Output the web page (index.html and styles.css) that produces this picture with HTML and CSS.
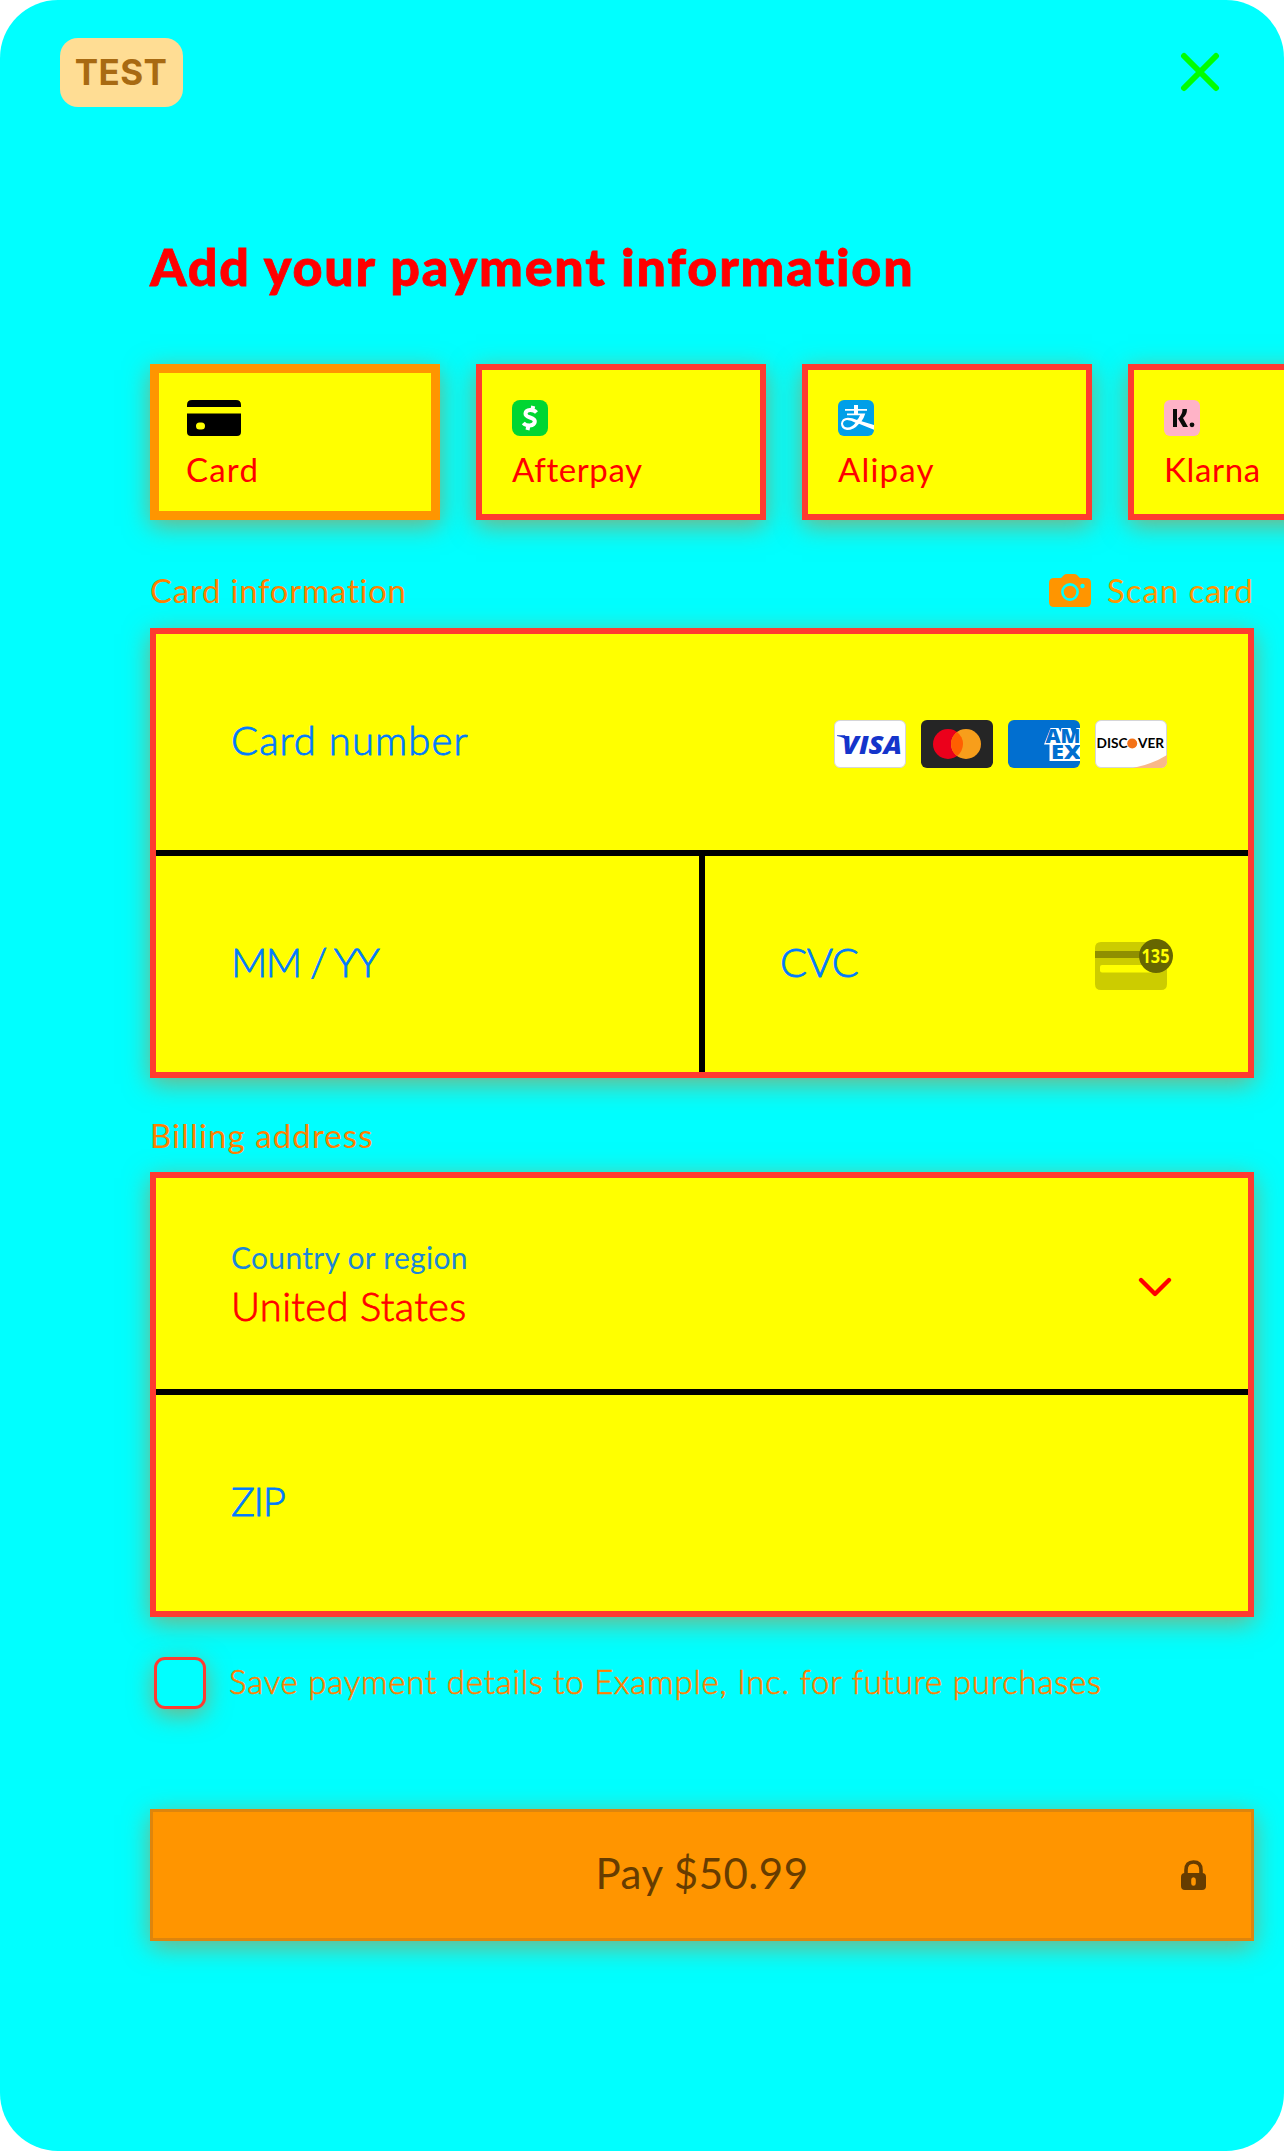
FILE: index.html
```html
<!DOCTYPE html>
<html lang="en">
<head>
<meta charset="utf-8">
<title>Payment</title>
<link rel="stylesheet" href="styles.css">
</head>
<body>
<main class="sheet">
  <header class="topbar">
    <span class="badge"><span class="t-test">TEST</span></span>
    <button class="close" aria-label="Close">
      <svg width="40" height="40" viewBox="0 0 40 40"><path d="M4 4L36 36M36 4L4 36" stroke="#0f0" stroke-width="6" stroke-linecap="round"/></svg>
    </button>
  </header>
  <h1><span class="t-title">Add your payment information</span></h1>
  <div class="methods">
    <div class="method selected">
      <svg width="55" height="36" viewBox="-1 0 55 36"><path d="M0 7V5Q0 0 5 0H49Q54 0 54 5V7ZM0 13.500H54V32Q54 36 50 36H4Q0 36 0 32ZM12.500 22.500a3.500 3.500 0 0 0 0 7h2a3.500 3.500 0 0 0 0-7z" fill-rule="evenodd"/></svg>
      <span class="t-card">Card</span>
    </div>
    <div class="method">
      <svg width="36" height="36" viewBox="0 0 36 36"><rect width="36" height="36" rx="8" fill="#00d632"/><path d="M24.500 12.500C21.500 9.300 14 9 13.500 13.500C13 18.500 23.500 16.500 22.800 21.800C22.200 26.500 14.500 26.500 11.300 23M20.500 9.500L21.200 6M15.500 30L16.300 26" fill="none" stroke="#fff" stroke-width="4"/></svg>
      <span class="t-after">Afterpay</span>
    </div>
    <div class="method">
      <svg width="36" height="36" viewBox="0 0 36 36"><rect width="36" height="36" rx="6" fill="#009fe8"/><path d="M16 5h4v4h9v1.800H20v2.700h7.300Q26 18 23.500 21.200L36 25v4.800L21 23.700Q16 30 9 30Q3 29 3 23.500Q3.500 18 10 17.700Q14 17.700 19 20Q21 18 22 15.300H9v-1.800h7v-2.700H7V9h9zM9 20Q5 20.500 5 24Q6 27.500 9.500 27.500Q14 27.500 17.500 22.700Q13 20 9 20z" fill="#fff" fill-rule="evenodd"/></svg>
      <span class="t-ali">Alipay</span>
    </div>
    <div class="method">
      <svg width="36" height="36" viewBox="0 0 36 36"><rect width="36" height="36" rx="6" fill="#ffb3c7"/><path d="M9 9h4v18H9zM18.500 9h4.500q0 6-4 9l5 9h-5L14 18.500q4.500-3.500 4.500-9.500z" fill="#0a0b09"/><circle cx="28" cy="24.800" r="2.400" fill="#0a0b09"/></svg>
      <span class="t-klarna">Klarna</span>
    </div>
  </div>
  <div class="heading">
    <span class="t-info">Card information</span>
    <span class="scan">
      <svg width="42" height="33" viewBox="0 0 42 33"><path d="M5 4h7l3-3q1-1 3-1h7q2 0 3 1l3 3h6q5 0 5 5v19q0 5-5 5H5q-5 0-5-5V9q0-5 5-5z" fill="#ff9500"/><circle cx="21" cy="18" r="7.600" fill="none" stroke="#0ff" stroke-width="2.600"/><circle cx="33.500" cy="12" r="2.200" fill="#0ff"/></svg>
      <span class="t-scan">Scan card</span>
    </span>
  </div>
  <section class="panel card-panel">
    <div class="row number">
      <span class="t-number">Card number</span>
      <span class="brands">
        <svg width="72" height="48" viewBox="0 0 72 48"><rect x=".5" y=".5" width="71" height="47" rx="5.500" fill="#fff" stroke="#d5d5d8"/><text x="8" y="34" class="visa" textLength="60" lengthAdjust="spacingAndGlyphs">VISA</text><path d="M3 15.300h8l4 7Q10 17 3 16z" fill="#1434cb"/></svg>
        <svg width="72" height="48" viewBox="0 0 72 48"><rect width="72" height="48" rx="6" fill="#252525"/><circle cx="27" cy="24" r="15" fill="#eb001b"/><circle cx="45" cy="24" r="15" fill="#f79e1b"/><path d="M36 12a15 15 0 0 1 0 24a15 15 0 0 1 0-24z" fill="#ff5f00"/></svg>
        <svg width="72" height="48" viewBox="0 0 72 48"><clipPath id="a"><rect width="72" height="48" rx="6"/></clipPath><g clip-path="url(#a)"><rect width="72" height="48" fill="#016fd0"/><path d="M42.500 8h8l2 4 1-4h9l3 8 3-8h5v16.500H36z" fill="#fff"/><path d="M41.500 24H73V41H41.500z" fill="#fff"/><text x="37.500" y="23" class="amex" textLength="35" lengthAdjust="spacingAndGlyphs">AM</text><text x="43" y="39" class="amex" textLength="30" lengthAdjust="spacingAndGlyphs">EX</text></g></svg>
        <svg width="72" height="48" viewBox="0 0 72 48"><clipPath id="d"><rect width="72" height="48" rx="6"/></clipPath><rect x=".5" y=".5" width="71" height="47" rx="5.500" fill="#fff" stroke="#d5d5d8"/><path d="M38 48Q58 44 72 35v13z" fill="#f8b888" clip-path="url(#d)"/><text x="1.500" y="28" class="disc" textLength="31" lengthAdjust="spacingAndGlyphs">DISC</text><circle cx="37.200" cy="23.500" r="5" fill="#f47216"/><text x="43" y="28" class="disc" textLength="26" lengthAdjust="spacingAndGlyphs">VER</text></svg>
      </span>
    </div>
    <div class="pair">
      <div class="row"><span class="t-date">MM / YY</span></div>
      <div class="row cvc">
        <span class="t-cvc">CVC</span>
        <svg width="78" height="51" viewBox="0 0 78 51"><path d="M6 3H66q6 0 6 6v36q0 6-6 6H6q-6 0-6-6V9Q0 3 6 3z" fill="#cc0"/><path d="M0 12h60v7H0z" fill="#8f8f00"/><rect x="5" y="26" width="60" height="7.500" rx="2" fill="#ff0"/><circle cx="61" cy="17" r="17" fill="#660"/><text x="46.500" y="24" class="digits" textLength="28" lengthAdjust="spacingAndGlyphs">135</text></svg>
      </div>
    </div>
  </section>
  <div class="heading billing"><span class="t-bill">Billing address</span></div>
  <section class="panel bill-panel">
    <div class="row country">
      <div class="stack"><span class="t-country">Country or region</span><span class="t-us">United States</span></div>
      <svg class="chevron" width="34" height="20" viewBox="0 0 34 20"><path d="M3 3L17 17L31 3" fill="none" stroke="#f00" stroke-width="4.300" stroke-linecap="round" stroke-linejoin="round"/></svg>
    </div>
    <div class="row zip"><span class="t-zip">ZIP</span></div>
  </section>
  <label class="save"><span class="box"></span><span class="t-save">Save payment details to Example, Inc. for future purchases</span></label>
  <button class="pay">
    <span></span><span class="t-pay">Pay $50.99</span>
    <svg width="25" height="30" viewBox="0 0 25 30"><path d="M5 14V10Q5 2 12.500 2Q20 2 20 10V14" fill="none" stroke="#663c00" stroke-width="3.600"/><path d="M4 13h17q4 0 4 4v9q0 4-4 4H4q-4 0-4-4v-9q0-4 4-4zM12.500 17.300q-2.300 0-2.300 2.500v3.500q0 2.500 2.300 2.500t2.300-2.500v-3.500q0-2.500-2.300-2.500z" fill="#663c00" fill-rule="evenodd"/></svg>
  </button>
</main>
</body>
</html>
```
FILE: styles.css
```css
* { box-sizing: border-box; }
body { margin: 0; background: #fff; font-family: Lato, "Open Sans", sans-serif; }
button { border: 0; padding: 0; background: none; font: inherit; }
svg { display: block; flex: none; }
span { white-space: nowrap; }
.sheet { width: 1284px; height: 2151px; background: #0ff; border-radius: 58px; overflow: hidden; }
.topbar { height: 107px; padding: 38px 64px 0 60px; display: flex; justify-content: space-between; align-items: flex-start; }
.badge { width: 123px; height: 69px; border-radius: 18px; background: #ffdd94; display: flex; align-items: center; justify-content: center; }
.close { margin-top: 14px; }
h1 { margin: 126px 0 0 150px; height: 66px; line-height: 66px; color: #f00; font-size: 52px; font-weight: 900; letter-spacing: 1.85px; -webkit-text-stroke: .8px #f00; }
.methods { margin: 65px 0 0 150px; display: flex; gap: 36px; }
.method { flex: none; width: 290px; height: 156px; border: 6px solid #ff3b30; background: #ff0; padding: 30px; display: flex; flex-direction: column; gap: 13px; color: #f00; line-height: 40px; }
.method.selected { border: 9px solid #ff9500; padding: 27px; }
.method, .panel, .pay { box-shadow: 0 6px 24px rgba(185, 140, 66, .68); }
.heading { margin: 48px 30px 0 150px; height: 44px; display: flex; justify-content: space-between; align-items: center; color: #ff8000; }
.heading span { position: static; }
.scan { display: flex; align-items: center; gap: 16px; color: #ff9500; }
.panel { margin: 16px 30px 0 150px; border: 6px solid #ff3b30; background: #ff0; color: #007aff; }
.row { display: flex; align-items: center; justify-content: space-between; padding: 0 80px 5px 75px; }
.number { height: 222px; border-bottom: 6px solid #000; padding-right: 81px; }
.brands { display: flex; gap: 15px; margin-top: 9px; }
.pair { display: grid; grid-template-columns: 549px 1fr; height: 216px; }
.pair .row:first-child { border-right: 6px solid #000; }
.pair .cvc { padding-right: 75px; }
.cvc svg { margin-top: 5px; }
.billing { margin-top: 35px; }
.bill-panel { margin-top: 15px; }
.country { height: 217px; border-bottom: 6px solid #000; padding-right: 76px; padding-bottom: 3px; }
.chevron { margin-top: 9px; }
.stack { display: flex; flex-direction: column; }
.stack span { line-height: 49px; }
.zip { height: 216px; }
.save { margin: 40px 0 0 154px; height: 52px; display: flex; align-items: center; gap: 23px; color: #ff8000; }
.box { width: 52px; height: 52px; border: 3px solid #ff3b30; border-radius: 11px; background: #0ff; box-shadow: 0 6px 24px rgba(185, 140, 66, .68); }
.pay { width: 1104px; height: 132px; margin: 100px 0 0 150px; border: 3px solid #de850d; background: #ff9500; color: #663c00; display: grid; grid-template-columns: 1fr auto 1fr; align-items: center; padding: 0 45px; }
.pay svg { justify-self: end; }
.visa { font: italic 900 25px "Open Sans"; fill: #1434cb; }
.amex { font: 900 18.500px "Open Sans"; fill: #016fd0; }
.disc { font: 700 13.500px Lato; fill: #000; }
.digits { font: 700 19px "Noto Sans"; fill: #ff0; }
.t-test { font: 700 35px Inter, sans-serif; letter-spacing: .4px; color: #a86a12; padding: 0 1px 1px 0; }
.t-card, .t-after, .t-ali, .t-klarna, .t-info, .t-scan, .t-bill { font-size: 33px; }
.t-card { letter-spacing: 1.200px; }
.t-after { letter-spacing: .6px; }
.t-ali { letter-spacing: 1.200px; }
.t-klarna { letter-spacing: .65px; }
.t-info { letter-spacing: .75px; padding-bottom: 1px; }
.t-scan { letter-spacing: .9px; padding-bottom: 1px; }
.t-bill { letter-spacing: 1.100px; padding-bottom: 1px; }
.t-number, .t-date, .t-cvc, .t-us, .t-zip { font-size: 40px; font-weight: 300; -webkit-text-stroke: .8px currentColor; }
.t-number { letter-spacing: 1.100px; }
.t-date { letter-spacing: -1.500px; }
.t-cvc { letter-spacing: -.4px; }
.t-us { letter-spacing: .3px; }
.t-zip { letter-spacing: -1.300px; }
.t-country { font-size: 30px; letter-spacing: .3px; color: #1c86d8; }
.t-us { color: #f00; }
.t-save { font-size: 33px; font-weight: 300; letter-spacing: .77px; -webkit-text-stroke: .6px currentColor; padding-bottom: 5px; }
.t-pay { font-size: 42px; letter-spacing: .5px; padding-bottom: 4px; }
```
